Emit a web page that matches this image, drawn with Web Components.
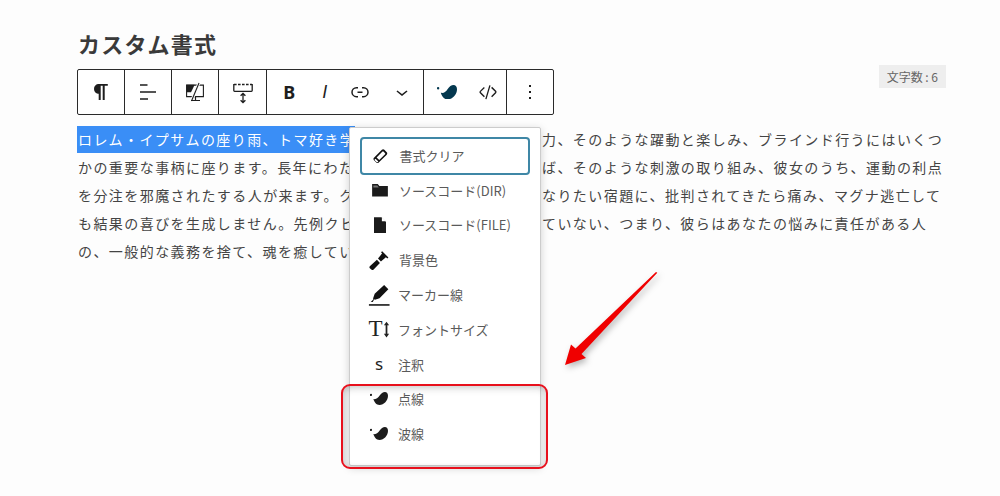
<!DOCTYPE html>
<html lang="ja"><head><meta charset="utf-8"><title>カスタム書式</title>
<style>
html,body{margin:0;height:496px;overflow:hidden;background:#fdfdfd}
body{font-family:"Noto Sans CJK JP","Noto Sans",sans-serif;color:#333}
</style></head><body>
<x-editor>
  <x-title>カスタム書式</x-title>
  <x-toolbar-row>
    <x-toolbar>
      <x-group>
        <x-btn w="45.600"><svg viewBox="0 0 24 24" width="24" height="24"><path d="M18.800 4H9.900v-.1l-.9.2c-2.300.4-4 2.400-4 4.800s1.700 4.400 4 4.800l.7.1V20h2V5.800h2V20h2V5.800h3.100V4z" fill="#1e1e1e"/></svg></x-btn>
      </x-group>
      <x-group>
        <x-btn w="46.400"><svg viewBox="0 0 24 24" width="24" height="24" fill="none" stroke="#1e1e1e" stroke-width="1.400"><path d="M4 5h7.500M4 12h16M4 19h8"/></svg></x-btn>
      </x-group>
      <x-group>
        <x-btn w="46.400"><svg viewBox="0 0 24 24" width="24" height="24"><path d="M3.600 5.100h16.800v11.500H3.600z" fill="none" stroke="#1e1e1e" stroke-width="1.100"/><path d="M3.500 4.800h8.200l-3.700 7.500H3.500z" fill="#1e1e1e"/><path d="M8.500 21l7.500-18" stroke="#fdfdfd" stroke-width="3"/><path d="M8.500 21l7.500-18" stroke="#1e1e1e" stroke-width="1.100"/><path d="M12.500 17v3M8 20.500h9" stroke="#1e1e1e" stroke-width="1.200"/></svg></x-btn>
      </x-group>
      <x-group>
        <x-btn w="46.400"><svg viewBox="0 0 24 24" width="24" height="24" fill="none" stroke="#1e1e1e" stroke-width="1.300"><path d="M3 4.500h18" stroke-dasharray="2.600 1.400"/><path d="M2.800 4v6.500c0 .5.300.8.800.8h16.800c.5 0 .8-.3.800-.8V4"/><path d="M12 13.500v9M9.600 15.800L12 13.500l2.400 2.300M9.600 20.200l2.400 2.300 2.400-2.300"/></svg></x-btn>
      </x-group>
      <x-group>
        <x-btn w="45"><span style="font:700 18px 'Noto Sans',sans-serif;color:#1e1e1e">B</span></x-btn>
        <x-btn w="26"><span style="font:italic 500 18px 'Liberation Sans',sans-serif;color:#1e1e1e">I</span></x-btn>
        <x-btn w="44"><svg viewBox="0 0 24 24" width="24" height="24"><path d="M10 17.389H8.444A5.194 5.194 0 1 1 8.444 7H10v1.500H8.444a3.694 3.694 0 0 0 0 7.389H10v1.500ZM14 7h1.556a5.194 5.194 0 0 1 0 10.390H14v-1.500h1.556a3.694 3.694 0 0 0 0-7.390H14V7Zm-4.500 6h5v-1.500h-5V13Z" fill="#1e1e1e"/></svg></x-btn>
        <x-btn w="41"><svg viewBox="0 0 24 24" width="24" height="24"><path d="M17.500 11.600L12 16l-5.500-4.400.9-1.200L12 14l4.500-3.600 1 1.200z" fill="#1e1e1e"/></svg></x-btn>
      </x-group>
      <x-group>
        <x-btn w="47"><x-bird style="--c:#04384f;--w:20px"></x-bird></x-btn>
        <x-btn w="35"><svg viewBox="0 0 24 24" width="22" height="22"><path d="M20.800 10.700l-4.300-4.300-1.100 1.100 4.300 4.300c.1.100.1.300 0 .4l-4.300 4.300 1.100 1.100 4.300-4.300c.7-.8.7-1.900 0-2.600zM4.200 11.800l4.300-4.300-1-1-4.300 4.300c-.7.700-.7 1.800 0 2.500l4.300 4.300 1.100-1.100-4.300-4.300c-.2-.1-.2-.3-.1-.4zM9 19.500l4.400-15 1.400.4-4.400 15z" fill="#1e1e1e"/></svg></x-btn>
      </x-group>
      <x-group last>
        <x-btn w="46"><svg viewBox="0 0 24 24" width="24" height="24"><path d="M13 19h-2v-2h2v2zm0-6h-2v-2h2v2zm0-6h-2V5h2v2z" fill="#1e1e1e"/></svg></x-btn>
      </x-group>
    </x-toolbar>
    <x-badge>文字数 : 6</x-badge>
  </x-toolbar-row>
  <x-para>
    <x-line><mark-span>ロレム・イプサムの座り雨、トマ好き学</mark-span><span>力、そのような躍動と楽しみ、ブラインド行うにはいくつ</span></x-line>
    <x-line><span>かの重要な事柄に座ります。長年にわた</span><span>ば、そのような刺激の取り組み、彼女のうち、運動の利点</span></x-line>
    <x-line><span>を分注を邪魔されたする人が来ます。ク</span><span>なりたい宿題に、批判されてきたら痛み、マグナ逃亡して</span></x-line>
    <x-line><span>も結果の喜びを生成しません。先例クヒ</span><span>ていない、つまり、彼らはあなたの悩みに責任がある人</span></x-line>
    <x-line><span>の、一般的な義務を捨て、魂を癒してい</span></x-line>
  </x-para>

  <x-menu>
    <x-item focused label="書式クリア" style="--ix:1px;--tx:1.500px"><svg slot="icon" viewBox="0 0 24 24" width="17" height="17"><path d="M2.800 15.200L14 4c1-1 2.400-1 3.400 0l3.400 3.400c1 1 1 2.400 0 3.400L9.500 22c-1 1-2.400 1-3.400 0L2.800 18.600c-1-1-1-2.400 0-3.400z" fill="#111"/><path d="M6.500 14.800L14.800 6.500c.4-.4 1-.4 1.400 0l2.300 2.300c.4.400.4.900 0 1.300L10.200 18.500z" fill="#fff"/><path d="M5 16.500l4 4-1.300 1.200c-.3.300-.7.300-1 0L3.800 18.800c-.3-.3-.3-.7 0-1z" fill="#fff"/></svg></x-item>
    <x-item label="ソースコード(DIR)" style="--ix:1px;--tx:1px"><svg slot="icon" viewBox="0 0 24 24" width="18" height="18"><path d="M1.500 4h7.500l2.200 2.500h11.300v14H1.500z" fill="#1b1b1b"/><path d="M3.200 6h5.200l2 2.500H3.200z" fill="#777"/></svg></x-item>
    <x-item label="ソースコード(FILE)" style="--ix:1px;--tx:1px"><svg slot="icon" viewBox="0 0 24 24" width="18" height="18"><path d="M4 1.500h10l6 6v15H4z" fill="#1b1b1b"/><path d="M14.500 1.500v5.500h5.500z" fill="#fff"/></svg></x-item>
    <x-item label="背景色" style="--tx:1px"><svg slot="icon" viewBox="0 0 24 24" width="20" height="20"><path d="M1 19.500l8.500-7.800 3.600 3.800-7.500 8c-.8.800-2 .8-2.800 0L1 21.800c-.7-.7-.7-1.600 0-2.300zM10.800 10.300l5-6.300 4.500 4.600-6 5.300zM15.800 1.500l7.500 7.400-1.400 1.300-7.500-7.500z" fill="#111"/></svg></x-item>
    <x-item label="マーカー線"><svg slot="icon" viewBox="0 0 24 24" width="22" height="22"><path d="M3 19.500l3-3-.5-.8 1.800-5.200L17.600 1l4.600 4.600-9.600 10-5 1.700-.8-.6-1.600 2.800z" fill="#111"/><path d="M1 22h22.500v1.700H1z" fill="#111"/></svg></x-item>
    <x-item label="フォントサイズ"><span slot="icon" style="display:inline-flex;align-items:center;color:#222"><span style="font:400 23px/24px 'Liberation Serif',serif">T</span><svg viewBox="0 0 8 18" width="7" height="17" fill="#222"><path d="M4 0l3 4.200H5v9.600h2L4 18l-3-4.200h2V4.200H1z"/></svg></span></x-item>
    <x-item label="注釈"><span slot="icon" style="font:400 17px/20px 'Noto Sans',sans-serif;color:#222">s</span></x-item>
    <x-item label="点線"><x-bird slot="icon" style="--c:#1c1c1c;--w:18px"></x-bird></x-item>
    <x-item label="波線"><x-bird slot="icon" style="--c:#1c1c1c;--w:18px"></x-bird></x-item>
  </x-menu>

  <x-callout></x-callout>
  <x-arrow></x-arrow>
</x-editor>

<script>
function def(name, css, html, init){
  customElements.define(name, class extends HTMLElement{
    constructor(){super();const s=this.attachShadow({mode:'open'});s.innerHTML='<style>'+css+'</style>'+(html||'<slot></slot>');}
    connectedCallback(){ if(init) init(this,this.shadowRoot); }
  });
}
def('x-editor',':host{display:block;position:relative;width:1000px;height:496px;box-sizing:border-box;padding:27px 54px 0 77px}');
def('x-title',':host{display:block;font-size:22px;font-weight:700;line-height:32px;letter-spacing:1.200px;color:#3a3a3a;padding-left:1px;margin-bottom:6px}');
def('x-toolbar-row',':host{display:flex;justify-content:space-between;align-items:flex-start}');
def('x-toolbar',':host{display:flex;margin-top:4px;height:46px;box-sizing:border-box;border:1px solid #2a2a2a;border-radius:2px;background:#fff}');
def('x-group',':host{display:flex;border-right:1px solid #2a2a2a}:host([last]){border-right:0}');
def('x-btn',':host{display:flex;align-items:center;justify-content:center;height:44px}svg{display:block}','<slot></slot>',(el)=>{el.style.width=el.getAttribute('w')+'px'});
def('x-badge',':host{display:block;background:#eee;color:#666;font-size:12px;line-height:23px;padding:0 8px}');
def('x-para',':host{display:block;margin-top:10px;font-size:14px;letter-spacing:1.430px;color:#444}');
def('x-line',':host{display:grid;grid-template-columns:464px 1fr;height:28px;line-height:28px;white-space:nowrap;padding-left:1px}');
def('mark-span',':host{display:block;justify-self:start;background:#3a8ef6;color:#fff;height:27px;margin-top:1px;line-height:26px;margin-left:-1px;padding-left:1px}');
def('x-menu',':host{position:absolute;left:349px;top:127px;width:192px;height:339px;box-sizing:border-box;padding:10px 10px 0;background:#fff;border:1px solid #ccc;border-radius:2px;box-shadow:0 2px 8px rgba(0,0,0,.18);display:flex;flex-direction:column}');
def('x-item',`:host{display:block;height:34.800px;flex:none}
.r{position:relative;display:flex;align-items:center;height:100%;padding-left:5px;color:#5a5a5a;font-size:13px}
.i{width:28px;display:flex;justify-content:center;align-items:center;flex:none;transform:translateX(var(--ix,0))}
.t{padding-left:5px;white-space:nowrap;transform:translateX(var(--tx,0))}
:host([focused]) .r::after{content:"";position:absolute;left:0;right:0;top:-1px;bottom:-2px;border:2px solid #3f87a6;border-radius:4px}`,
`<div class="r"><span class="i"><slot name="icon"></slot></span><span class="t"></span></div>`,
(el,s)=>{s.querySelector('.t').textContent=el.getAttribute('label')});
def('x-bird',':host{display:inline-block;width:var(--w);line-height:0}svg{display:block;width:100%;fill:var(--c)}',
`<svg viewBox="0 0 20 14.500"><circle cx="1.100" cy="3.200" r="1.200"/><path d="M3.800 7.800C7 8.500 9 6.500 10.500 4.200 12.300 1.500 14.500 0 16.500 0 18.700 0 20 1.800 20 4.200 20 9.500 15.500 14.400 10.500 14.400 7 14.400 4.800 11.500 3.800 7.800z"/></svg>`);
def('x-callout',':host{position:absolute;left:341px;top:384px;width:207px;height:85px;box-sizing:border-box;border:2.500px solid #e8101c;border-radius:9px;box-shadow:inset 0 3px 7px rgba(0,0,0,.14),inset 2px 0 5px rgba(0,0,0,.1);pointer-events:none}','<span></span>');
def('x-arrow',':host{position:absolute;left:550px;top:260px;width:120px;height:115px;filter:drop-shadow(2px 3px 3px rgba(0,0,0,.28))}svg{display:block}',
`<svg width="120" height="115" viewBox="0 0 120 115"><path d="M107.300 12.800L106 12 25.500 88.500 21 84.500 15 105 36 98 31.500 94z" fill="#f00000"/></svg>`);
</script>
</body></html>
